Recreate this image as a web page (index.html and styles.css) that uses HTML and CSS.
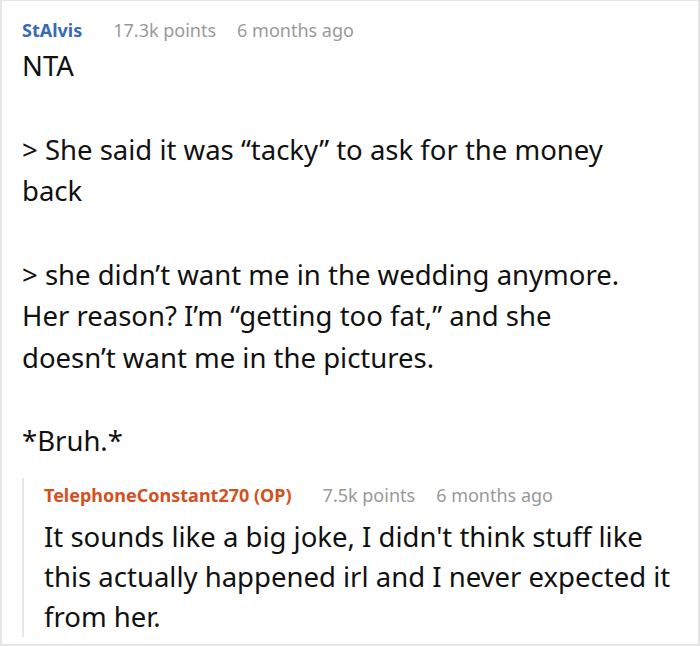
FILE: index.html
```html
<!DOCTYPE html>
<html>
<head>
<meta charset="utf-8">
<link rel="stylesheet" href="styles.css">
</head>
<body>
<div class="frame">
  <div class="comment">
    <div class="meta">
      <span class="author">StAlvis</span>
      <span class="points">17.3k points</span>
      <span class="time">6 months ago</span>
    </div>
    <div class="body">
      <p>NTA</p>
      <p>&gt; She said it was “tacky” to ask for the money back</p>
      <p>&gt; she didn’t want me in the wedding anymore. Her reason? I’m “getting too fat,” and she doesn’t want me in the pictures.</p>
      <p>*Bruh.*</p>
    </div>
    <div class="reply">
      <div class="meta reply-meta">
        <span class="author op">TelephoneConstant270 (OP)</span>
        <span class="points">7.5k points</span>
        <span class="time">6 months ago</span>
      </div>
      <div class="body reply-body">
        <p>It sounds like a big joke, I didn't think stuff like this actually happened irl and I never expected it from her.</p>
      </div>
    </div>
  </div>
</div>
</body>
</html>
```
FILE: styles.css
```css
html, body {
  margin: 0;
  padding: 0;
  background: #fff;
}
.frame {
  box-sizing: border-box;
  width: 700px;
  height: 646px;
  border: 2px solid #e6e6e6;
  border-top-width: 1px;
  overflow: hidden;
  font-family: "Noto Sans", "Open Sans", sans-serif;
  color: #111;
}
.comment {
  padding: 14px 0 0 20px;
}
.meta {
  display: flex;
  align-items: baseline;
  font-size: 18px;
  line-height: 30px;
  color: #999;
}
.author {
  font-weight: bold;
  color: #3a6ab4;
  margin-right: 31px;
}
.points {
  margin-right: 21px;
}
.body {
  width: 630px;
  font-size: 27.5px;
  line-height: 41.5px;
}
.body p {
  margin: 0 0 42px 0;
}
.body p:last-child {
  margin-bottom: 0;
}
.reply {
  margin-top: 16px;
  border-left: 2px solid #e6e6e6;
  padding-left: 20px;
}
.reply-meta {
  line-height: 34px;
}
.reply-body {
  width: 640px;
  margin-top: 5px;
  line-height: 40px;
}
.op {
  color: #d4501e;
}
```
